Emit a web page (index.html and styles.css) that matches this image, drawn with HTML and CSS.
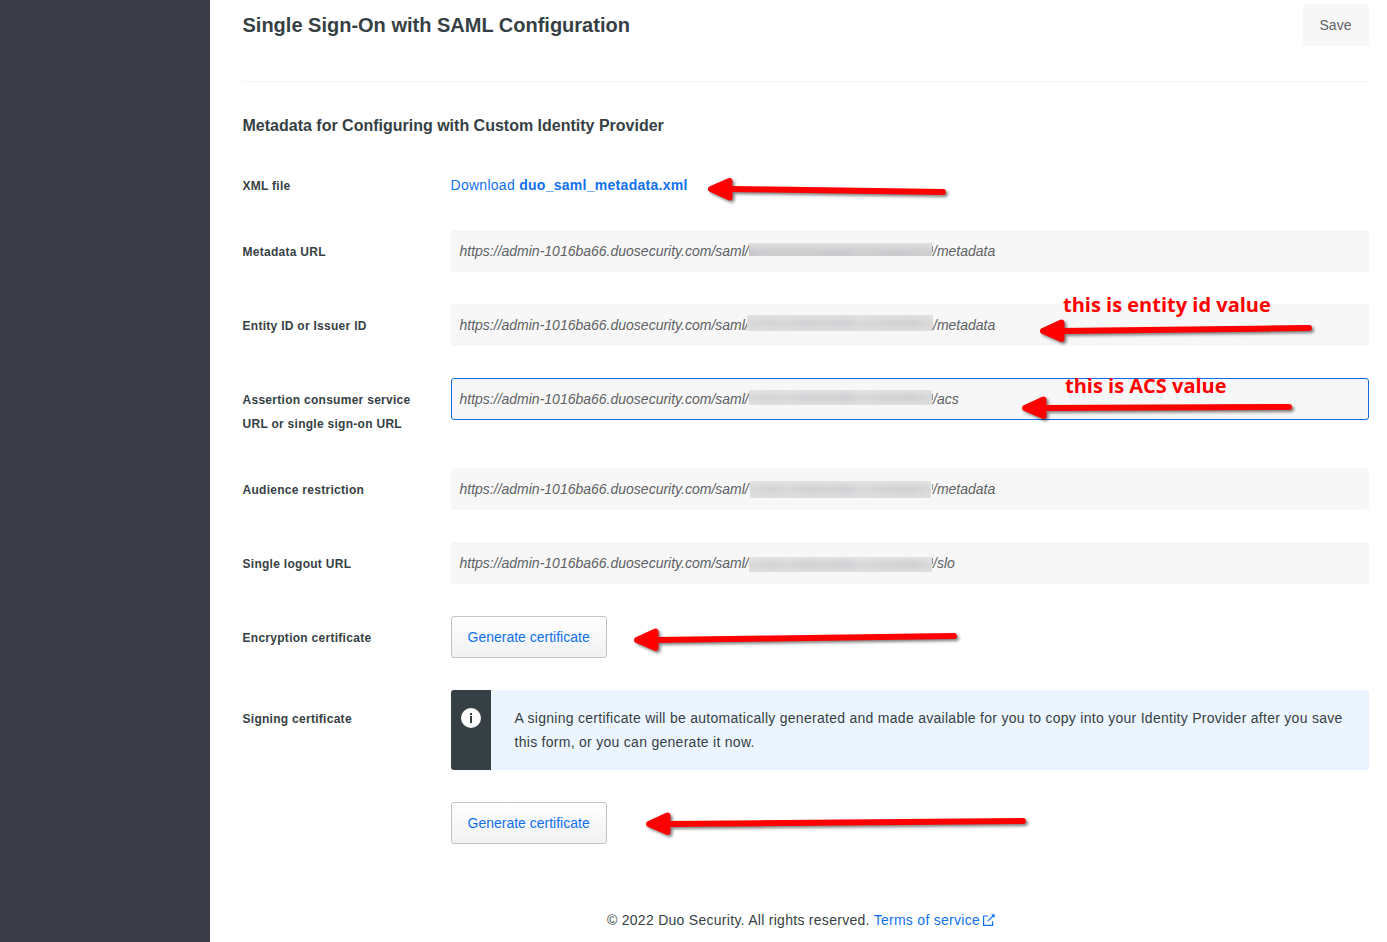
FILE: index.html
```html
<!DOCTYPE html>
<html lang="en">
<head>
<meta charset="utf-8">
<title>Single Sign-On with SAML Configuration</title>
<link rel="stylesheet" href="styles.css">
</head>
<body>
<div class="page">
  <aside class="sidebar"></aside>
  <main class="main">
    <header class="header">
      <h1 class="title">Single Sign-On with SAML Configuration</h1>
      <button class="save">Save</button>
    </header>
    <h2 class="subtitle">Metadata for Configuring with Custom Identity Provider</h2>
    <div class="form">
      <div class="row row-link"><div class="label">XML file</div><div class="download"><a class="link">Download <b>duo_saml_metadata.xml</b></a></div></div>
      <div class="row"><div class="label">Metadata URL</div><div class="field"><span class="prefix">https://admin-1016ba66.duosecurity.com/saml/</span><span class="mask mask-url"></span><span class="suffix edge">/metadata</span></div></div>
      <div class="row"><div class="label">Entity ID or Issuer ID</div><div class="field"><span class="prefix">https://admin-1016ba66.duosecurity.com/saml/</span><span class="mask mask-entity"></span><span class="suffix">/metadata</span></div></div>
      <div class="row"><div class="label">Assertion consumer service<br>URL or single sign-on URL</div><div class="field focused"><span class="prefix">https://admin-1016ba66.duosecurity.com/saml/</span><span class="mask mask-acs"></span><span class="suffix edge">/acs</span></div></div>
      <div class="row"><div class="label">Audience restriction</div><div class="field"><span class="prefix">https://admin-1016ba66.duosecurity.com/saml/</span><span class="mask mask-audience"></span><span class="suffix edge">/metadata</span></div></div>
      <div class="row"><div class="label">Single logout URL</div><div class="field"><span class="prefix">https://admin-1016ba66.duosecurity.com/saml/</span><span class="mask mask-slo"></span><span class="suffix edge">/slo</span></div></div>
      <div class="row"><div class="label">Encryption certificate</div><button class="generate">Generate certificate</button></div>
      <div class="row">
        <div class="label label-signing">Signing certificate</div>
        <div class="signing">
          <div class="notice">
            <div class="notice-side">
              <svg width="20" height="20" viewBox="0 0 20 20"><circle cx="10" cy="10" r="10" fill="#fff"/><path d="M9 5h2v2H9zM9 8h2v7H9z" fill="#363f44"/></svg>
            </div>
            <p class="notice-text">A signing certificate will be automatically generated and made available for you to copy into your Identity Provider after you save this form, or you can generate it now.</p>
          </div>
          <button class="generate">Generate certificate</button>
        </div>
      </div>
    </div>
    <footer class="footer">© 2022 Duo Security. All rights reserved. <a class="link">Terms of service</a><svg class="external" width="12" height="12" viewBox="0 0 12 12" fill="none" stroke="#1170ee" stroke-width="1.2"><path d="M5 2H.6v9.4h9V7.2"/><path d="M4.8 7.2 10.5 1.5"/><path d="M8 .3h3.7V4z" fill="#1170ee" stroke="none"/></svg></footer>
  </main>
  <svg class="annotations" width="1387" height="942" viewBox="0 0 1387 942">
    <g class="arrow"><path class="head" d="M711 189 729.5 181V197.5Z"/><path class="shaft" d="M728 189 943 192"/></g>
    <g class="arrow"><path class="head" d="M1043 331 1061.5 322.5V339Z"/><path class="shaft" d="M1060 331 1309 328"/></g>
    <g class="arrow"><path class="head" d="M1025 408 1043.5 399.5V416Z"/><path class="shaft" d="M1042 408 1289 407"/></g>
    <g class="arrow"><path class="head" d="M637 640 655.5 631.5V648Z"/><path class="shaft" d="M654 640 954 636"/></g>
    <g class="arrow"><path class="head" d="M649 824 667.5 815.5V832Z"/><path class="shaft" d="M666 824 1023 821"/></g>
  </svg>
  <span class="note note-entity">this is entity id value</span>
  <span class="note note-acs">this is ACS value</span>
</div>
</body>
</html>
```

FILE: styles.css
```css
* { box-sizing: border-box; }
body { margin: 0; background: #fff; color: #363f44; font: 14px/24px "Liberation Sans", Arial, sans-serif; letter-spacing: 0.28px; }
button { font: inherit; border-radius: 3px; height: 42px; padding: 0 16px; }
.page { position: relative; display: flex; height: 942px; overflow: hidden; }
.sidebar { width: 210px; flex: none; background: #393c44; }
.main { flex: 1; padding: 4px 18px 0 32.5px; }
.header { display: flex; justify-content: space-between; align-items: flex-start; height: 78px; border-bottom: 1px solid #f4f4f4; }
.title { margin: 0; font-size: 20px; line-height: 42px; letter-spacing: 0; }
.save { width: 66px; padding: 0 17px 0 16px; border: 0; background: #f7f7f7; color: #5f6368; letter-spacing: 0; }
.subtitle { margin: 32px 0 0; font-size: 16px; line-height: 24px; letter-spacing: 0; }
.form { display: flex; flex-direction: column; gap: 32px; margin-top: 26px; }
.row { display: grid; grid-template-columns: 208px minmax(0, 1fr); align-items: start; }
.row-link { height: 34px; }
.label { padding-top: 10px; font-size: 12px; font-weight: bold; letter-spacing: 0.28px; }
.label-signing { padding-top: 17px; }
.download { padding-top: 9px; letter-spacing: 0.28px; }
.link { color: #1170ee; }
.field { display: flex; height: 42px; border: 1px solid #f7f7f7; border-radius: 3px; background: #f7f7f7; padding: 8px; font-style: italic; color: #5d6165; letter-spacing: 0; }
.focused { border-color: #1169e3; }
.prefix { width: 289px; white-space: nowrap; }
.mask { width: 183px; height: 15px; margin: 3px 1px 0 0.5px; background: linear-gradient(rgba(231,231,232,.75), transparent 50%, rgba(226,226,227,.75)), linear-gradient(90deg, #d8d8d9, #d2d3d4 12%, #d6d7d8 20%, #cfd0d2 32%, #d2d3d4 43%, #cecfd2 53%, #d8d8d9 61%, #d2d2d4 75%, #cfd0d2 90%, #d9d9da); }
.mask-url { height: 13px; margin-top: 4px; background: linear-gradient(#e0e0e1, rgba(208,208,210,.5) 60%, rgba(202,203,205,.5)), linear-gradient(90deg, #bdbec0, #cdced0 6%, #cfcfd1 30%, #c6c7ca 53%, #d2d2d4 61%, #c9c9cc 80%, #d2d2d4); }
.mask-entity { width: 186px; height: 16px; margin: 2px 0 0 -1.5px; }
.mask-audience { width: 181px; height: 17px; margin: 4px 2.5px 0 1px; }
.mask-slo { margin-top: 6px; }
.suffix { position: relative; }
.edge::before { content: ""; position: absolute; left: -1px; top: 7px; width: 1px; height: 6px; background: #8d9297; }
.generate { justify-self: start; width: 156px; border: 1px solid #c2c4ca; background: linear-gradient(#fff, #f0f1f2); color: #1170ee; letter-spacing: 0; white-space: nowrap; }
.signing { display: flex; flex-direction: column; align-items: flex-start; gap: 32px; }
.notice { display: flex; width: 100%; height: 80px; border-radius: 3px; overflow: hidden; background: #ecf5ff; }
.notice-side { width: 40px; flex: none; padding: 18px 10px; background: #363f44; }
.notice-side svg { display: block; }
.notice-text { margin: 0; padding: 16px 24px; }
.footer { margin-top: 64px; padding-right: 9.5px; text-align: center; }
.external { margin-left: 3px; vertical-align: -1px; }
.annotations { position: absolute; left: 0; top: 0; }
.arrow { filter: drop-shadow(2px 2px 1.5px rgba(0,0,0,.5)); stroke: #f00; fill: #f00; stroke-linejoin: round; stroke-linecap: round; }
.head { stroke-width: 6; }
.shaft { stroke-width: 6; }
.note { position: absolute; font: bold 20px/28px "Open Sans", "Noto Sans", sans-serif; letter-spacing: 0; color: #f00; white-space: nowrap; }
.note-entity { left: 1063px; top: 291px; }
.note-acs { left: 1065px; top: 372px; }
```
